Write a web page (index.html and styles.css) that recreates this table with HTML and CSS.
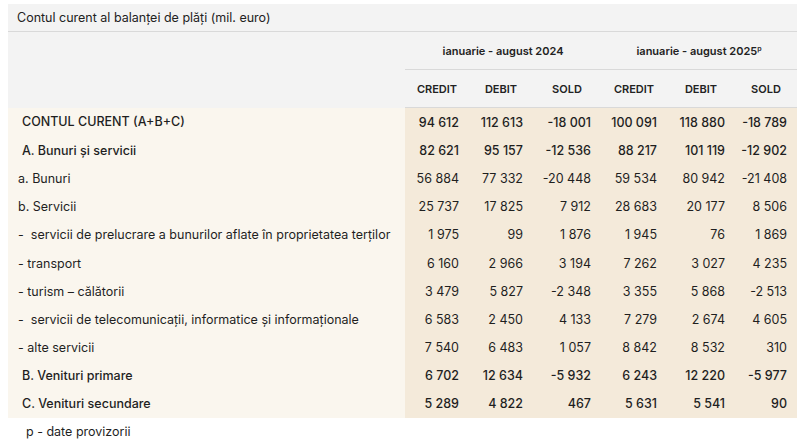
FILE: index.html
```html
<!DOCTYPE html>
<html lang="ro">
<head>
<meta charset="utf-8">
<link rel="stylesheet" href="styles.css">
</head>
<body>
<table class="bop">
  <colgroup>
    <col class="c-label">
    <col class="c1"><col class="c2"><col class="c3">
    <col class="c4"><col class="c5"><col class="c6">
  </colgroup>
  <thead>
    <tr class="title-row"><th colspan="7" class="title">Contul curent al balanței de plăți (mil. euro)</th></tr>
    <tr class="period-row">
      <th rowspan="2" class="blank"></th>
      <th colspan="3" class="period">ianuarie - august 2024</th>
      <th colspan="3" class="period">ianuarie - august 2025<sup>p</sup></th>
    </tr>
    <tr class="sub-row">
      <th>CREDIT</th><th>DEBIT</th><th>SOLD</th>
      <th>CREDIT</th><th>DEBIT</th><th>SOLD</th>
    </tr>
  </thead>
  <tbody>
    <tr class="strong"><td class="lbl lbl-strong">CONTUL CURENT (A+B+C)</td><td>94 612</td><td>112 613</td><td>-18 001</td><td>100 091</td><td>118 880</td><td>-18 789</td></tr>
    <tr class="strong"><td class="lbl lbl-strong">A. Bunuri și servicii</td><td>82 621</td><td>95 157</td><td>-12 536</td><td>88 217</td><td>101 119</td><td>-12 902</td></tr>
    <tr><td class="lbl">a. Bunuri</td><td>56 884</td><td>77 332</td><td>-20 448</td><td>59 534</td><td>80 942</td><td>-21 408</td></tr>
    <tr><td class="lbl">b. Servicii</td><td>25 737</td><td>17 825</td><td>7 912</td><td>28 683</td><td>20 177</td><td>8 506</td></tr>
    <tr><td class="lbl">-&nbsp; servicii de prelucrare a bunurilor aflate în proprietatea terților</td><td>1 975</td><td>99</td><td>1 876</td><td>1 945</td><td>76</td><td>1 869</td></tr>
    <tr><td class="lbl">- transport</td><td>6 160</td><td>2 966</td><td>3 194</td><td>7 262</td><td>3 027</td><td>4 235</td></tr>
    <tr><td class="lbl">- turism – călătorii</td><td>3 479</td><td>5 827</td><td>-2 348</td><td>3 355</td><td>5 868</td><td>-2 513</td></tr>
    <tr><td class="lbl">-&nbsp; servicii de telecomunicații, informatice și informaționale</td><td>6 583</td><td>2 450</td><td>4 133</td><td>7 279</td><td>2 674</td><td>4 605</td></tr>
    <tr><td class="lbl">- alte servicii</td><td>7 540</td><td>6 483</td><td>1 057</td><td>8 842</td><td>8 532</td><td>310</td></tr>
    <tr class="strong"><td class="lbl lbl-strong">B. Venituri primare</td><td>6 702</td><td>12 634</td><td>-5 932</td><td>6 243</td><td>12 220</td><td>-5 977</td></tr>
    <tr class="strong"><td class="lbl lbl-strong">C. Venituri secundare</td><td>5 289</td><td>4 822</td><td>467</td><td>5 631</td><td>5 541</td><td>90</td></tr>
  </tbody>
</table>
<p class="note">p - date provizorii</p>
</body>
</html>
```

FILE: styles.css
```css
html, body {
  margin: 0;
  padding: 0;
  background: #ffffff;
}
body {
  padding: 4px 0 0 8px;
  font-family: Inter, "Noto Sans", sans-serif;
  color: #1f1f1f;
  font-size: 12.5px;
}
.bop {
  border-collapse: collapse;
  table-layout: fixed;
  width: 789px;
}
.c-label { width: 397px; }
.c1 { width: 64px; }
.c2 { width: 64px; }
.c3 { width: 68px; }
.c4 { width: 66px; }
.c5 { width: 68px; }
.c6 { width: 62px; }

.bop th {
  background: #f3f3f3;
  font-weight: 600;
  font-size: 11px;
  padding: 0;
  color: #222;
}
.title-row th.title {
  text-align: left;
  font-weight: 400;
  font-size: 12.5px;
  height: 27px;
  padding-left: 9px;
  border-bottom: 1px solid #d9d9d9;
}
.period-row th { height: 37px; }
.period-row th.period {
  border-bottom: 1px solid #d9d9d9;
}
.period sup {
  font-size: 7px;
  vertical-align: 4px;
  line-height: 0;
}
.sub-row th {
  height: 37px;
  border-bottom: 1px solid #d9d9d9;
}

.bop td {
  height: 28.2px;
  padding: 0 10px 0 0;
  text-align: right;
  background: #f4eada;
  white-space: nowrap;
}
.bop td.lbl {
  text-align: left;
  padding-left: 10px;
  background: #faf6ee;
}
.bop td.lbl-strong {
  padding-left: 14px;
}
.strong td {
  font-weight: 500;
}
.note {
  margin: 6px 0 0 18px;
  font-size: 12.5px;
}
```
